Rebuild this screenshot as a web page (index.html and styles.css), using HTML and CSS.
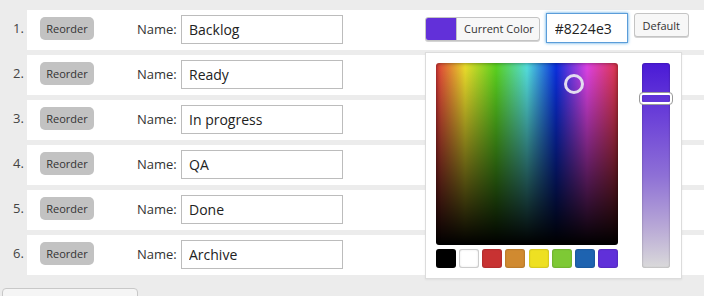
FILE: index.html
```html
<!DOCTYPE html>
<html>
<head>
<meta charset="utf-8">
<link rel="stylesheet" href="styles.css">
</head>
<body>
<ul class="list">
  <li class="item">
    <span class="num">1.</span>
    <div class="card">
      <button class="reorder">Reorder</button>
      <label class="name-label">Name:</label>
      <input class="name-input" value="Backlog">
      <div class="color-wrap">
        <button class="current-btn"><span class="current-swatch"></span><span class="current-text">Current Color</span></button>
        <input class="hex-input" value="#8224e3">
        <button class="default-btn">Default</button>
        <div class="picker">
          <div class="picker-main">
            <div class="square"><span class="square-handle"></span></div>
            <div class="palette">
              <span class="pal pal-black"></span>
              <span class="pal pal-white"></span>
              <span class="pal pal-red"></span>
              <span class="pal pal-orange"></span>
              <span class="pal pal-yellow"></span>
              <span class="pal pal-green"></span>
              <span class="pal pal-blue"></span>
              <span class="pal pal-purple"></span>
            </div>
          </div>
          <div class="slider"><span class="slider-handle"></span></div>
        </div>
      </div>
    </div>
  </li>
  <li class="item">
    <span class="num">2.</span>
    <div class="card">
      <button class="reorder">Reorder</button>
      <label class="name-label">Name:</label>
      <input class="name-input" value="Ready">
    </div>
  </li>
  <li class="item">
    <span class="num">3.</span>
    <div class="card">
      <button class="reorder">Reorder</button>
      <label class="name-label">Name:</label>
      <input class="name-input" value="In progress">
    </div>
  </li>
  <li class="item">
    <span class="num">4.</span>
    <div class="card">
      <button class="reorder">Reorder</button>
      <label class="name-label">Name:</label>
      <input class="name-input" value="QA">
    </div>
  </li>
  <li class="item">
    <span class="num">5.</span>
    <div class="card">
      <button class="reorder">Reorder</button>
      <label class="name-label">Name:</label>
      <input class="name-input" value="Done">
    </div>
  </li>
  <li class="item">
    <span class="num">6.</span>
    <div class="card">
      <button class="reorder">Reorder</button>
      <label class="name-label">Name:</label>
      <input class="name-input" value="Archive">
    </div>
  </li>
</ul>
<button class="add-btn"></button>
</body>
</html>
```
FILE: styles.css
```css
html, body {
  margin: 0;
  padding: 0;
}
body {
  background: #ececec;
  font-family: "Open Sans", "Liberation Sans", sans-serif;
  color: #333;
  width: 704px;
  height: 296px;
  overflow: hidden;
}
.list {
  list-style: none;
  margin: 0;
  padding: 10px 0 0 0;
  display: flex;
  flex-direction: column;
  gap: 5px;
}
.item {
  display: flex;
  height: 40px;
}
.num {
  width: 27px;
  box-sizing: border-box;
  padding-left: 13px;
  font-size: 13px;
  line-height: 36px;
  color: #444;
}
.card {
  flex: 1;
  background: #fff;
  display: flex;
  align-items: center;
  padding-left: 13px;
}
.reorder {
  width: 54px;
  height: 23px;
  margin: -3px 0 0 0;
  padding: 0;
  border: none;
  border-radius: 5px;
  background: #c2c2c2;
  color: #333;
  font-family: "Open Sans", "Liberation Sans", sans-serif;
  font-size: 11px;
}
.name-label {
  margin-left: 43px;
  margin-top: -2px;
  width: 44px;
  font-size: 13px;
  color: #333;
}
.name-input {
  width: 162px;
  height: 29px;
  box-sizing: border-box;
  border: 1px solid #bcbcbc;
  padding: 0 0 0 7px;
  margin: -1px 0 0 0;
  font-family: "Open Sans", "Liberation Sans", sans-serif;
  font-size: 14px;
  color: #222;
  background: #fff;
  outline: none;
}
.color-wrap {
  position: relative;
  align-self: flex-start;
  margin-top: 3px;
  margin-left: 82px;
  display: flex;
  align-items: flex-start;
  gap: 6px;
}
.current-btn {
  margin-top: 4px;
  display: flex;
  align-items: stretch;
  height: 24px;
  padding: 0;
  border: 1px solid #c4c4c4;
  border-radius: 3px;
  background: #f7f7f7;
  overflow: hidden;
  box-shadow: 0 1px 0 #d4d4d4;
  font-family: "Open Sans", "Liberation Sans", sans-serif;
}
.current-swatch {
  width: 30px;
  background: #6230d9;
}
.current-text {
  border-left: 1px solid #c4c4c4;
  padding: 0 5px 0 7px;
  font-size: 11px;
  line-height: 22px;
  color: #333;
}
.hex-input {
  width: 82px;
  height: 30px;
  box-sizing: border-box;
  margin: 0;
  padding: 0 0 0 8px;
  border: 1px solid #5b9dd9;
  box-shadow: 0 0 3px rgba(30, 140, 220, 0.8);
  font-family: "Open Sans", "Liberation Sans", sans-serif;
  font-size: 14px;
  color: #222;
  outline: none;
}
.default-btn {
  width: 55px;
  height: 24px;
  padding: 0;
  border: 1px solid #c4c4c4;
  border-radius: 3px;
  background: #f7f7f7;
  box-shadow: 0 1px 0 #d4d4d4;
  font-family: "Open Sans", "Liberation Sans", sans-serif;
  font-size: 11px;
  color: #333;
}
.picker {
  position: absolute;
  left: 0;
  top: 39px;
  z-index: 10;
  width: 257px;
  height: 227px;
  box-sizing: border-box;
  padding: 10px;
  border: 1px solid #dcdcdc;
  background: #fff;
  box-shadow: 0 1px 2px rgba(0, 0, 0, 0.06);
  display: flex;
}
.picker-main {
  width: 182px;
  display: flex;
  flex-direction: column;
  gap: 4px;
}
.square {
  position: relative;
  width: 182px;
  height: 182px;
  border-radius: 3px;
  background:
    linear-gradient(to bottom, rgba(0,0,0,0) 0%, rgba(0,0,0,0.45) 45%, #000 100%),
    linear-gradient(to right, #e23a3a 0%, #eddf2c 16%, #5bd420 33%, #55e0e0 50%, #0a2fe0 66%, #e043e6 83%, #e03648 100%);
  box-shadow: inset 0 0 4px rgba(0, 0, 0, 0.5);
}
.square-handle {
  position: absolute;
  left: 128px;
  top: 11px;
  width: 20px;
  height: 20px;
  box-sizing: border-box;
  border: 3px solid #e2dcef;
  border-radius: 50%;
}
.palette {
  display: flex;
  justify-content: space-between;
}
.pal {
  width: 20px;
  height: 19px;
  border-radius: 3px;
  box-shadow: inset 0 0 2px rgba(0, 0, 0, 0.35);
}
.pal-black { background: #000; }
.pal-white { background: #fff; box-shadow: inset 0 0 0 1px #ccc, inset 0 0 3px #ccc; }
.pal-red { background: #c83232; }
.pal-orange { background: #d08a30; }
.pal-yellow { background: #eee022; }
.pal-green { background: #7ec935; }
.pal-blue { background: #1e63b0; }
.pal-purple { background: #6030d9; }
.slider {
  position: relative;
  margin-left: 24px;
  width: 28px;
  height: 205px;
  border-radius: 3px;
  background: linear-gradient(to bottom, #4a1ad6 0%, #6a3fd8 25%, #8e70d6 55%, #b8a8d6 80%, #dadada 100%);
  box-shadow: inset 0 0 2px rgba(0, 0, 0, 0.35);
}
.slider-handle {
  position: absolute;
  left: -3px;
  top: 29px;
  width: 34px;
  height: 13px;
  box-sizing: border-box;
  border: 1px solid #9a9a9a;
  border-radius: 4px;
  box-shadow: inset 0 0 0 2px #fff;
}
.add-btn {
  display: block;
  margin: 13px 0 0 2px;
  width: 136px;
  height: 28px;
  padding: 0;
  border: 1px solid #c8c8c8;
  border-radius: 4px;
  background: #f5f5f5;
}
```
